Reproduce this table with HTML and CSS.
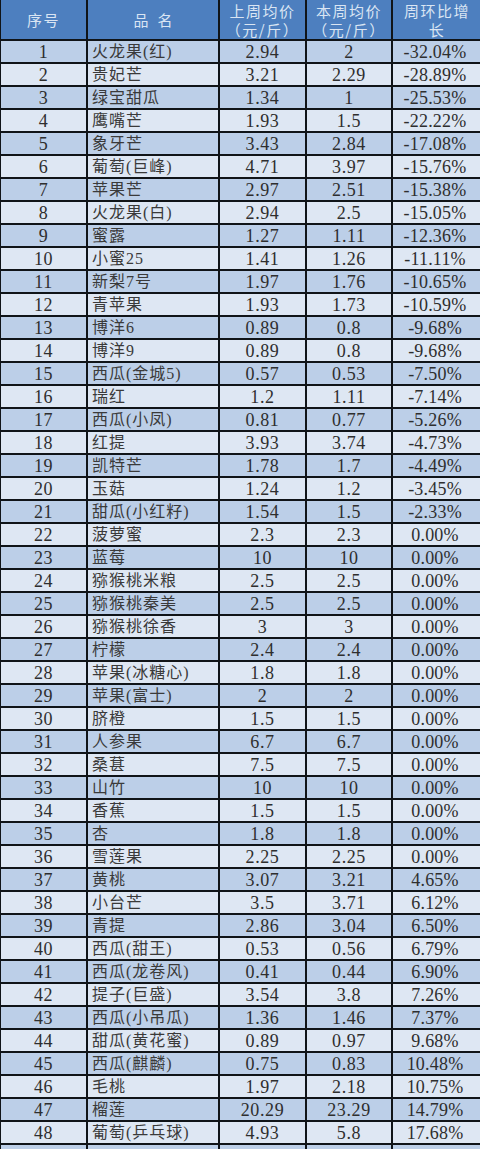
FILE: index.html
```html
<!DOCTYPE html>
<html lang="zh">
<head>
<meta charset="utf-8">
<title>水果价格周环比</title>
<link rel="stylesheet" href="styles.css">
</head>
<body>
<table class="price-table">
<colgroup>
<col class="c-no"><col class="c-name"><col class="c-last"><col class="c-this"><col class="c-rate">
</colgroup>
<thead>
<tr>
<th>序号</th>
<th class="wide">品名</th>
<th><span class="hline">上周均价</span><span class="hline">（元/斤）</span></th>
<th><span class="hline">本周均价</span><span class="hline">（元/斤）</span></th>
<th><span class="hline">周环比增</span><span class="hline">长</span></th>
</tr>
</thead>
<tbody>
<tr><td>1</td><td class="name">火龙果(红)</td><td>2.94</td><td>2</td><td>-32.04%</td></tr>
<tr><td>2</td><td class="name">贵妃芒</td><td>3.21</td><td>2.29</td><td>-28.89%</td></tr>
<tr><td>3</td><td class="name">绿宝甜瓜</td><td>1.34</td><td>1</td><td>-25.53%</td></tr>
<tr><td>4</td><td class="name">鹰嘴芒</td><td>1.93</td><td>1.5</td><td>-22.22%</td></tr>
<tr><td>5</td><td class="name">象牙芒</td><td>3.43</td><td>2.84</td><td>-17.08%</td></tr>
<tr><td>6</td><td class="name">葡萄(巨峰)</td><td>4.71</td><td>3.97</td><td>-15.76%</td></tr>
<tr><td>7</td><td class="name">苹果芒</td><td>2.97</td><td>2.51</td><td>-15.38%</td></tr>
<tr><td>8</td><td class="name">火龙果(白)</td><td>2.94</td><td>2.5</td><td>-15.05%</td></tr>
<tr><td>9</td><td class="name">蜜露</td><td>1.27</td><td>1.11</td><td>-12.36%</td></tr>
<tr><td>10</td><td class="name">小蜜25</td><td>1.41</td><td>1.26</td><td>-11.11%</td></tr>
<tr><td>11</td><td class="name">新梨7号</td><td>1.97</td><td>1.76</td><td>-10.65%</td></tr>
<tr><td>12</td><td class="name">青苹果</td><td>1.93</td><td>1.73</td><td>-10.59%</td></tr>
<tr><td>13</td><td class="name">博洋6</td><td>0.89</td><td>0.8</td><td>-9.68%</td></tr>
<tr><td>14</td><td class="name">博洋9</td><td>0.89</td><td>0.8</td><td>-9.68%</td></tr>
<tr><td>15</td><td class="name">西瓜(金城5)</td><td>0.57</td><td>0.53</td><td>-7.50%</td></tr>
<tr><td>16</td><td class="name">瑞红</td><td>1.2</td><td>1.11</td><td>-7.14%</td></tr>
<tr><td>17</td><td class="name">西瓜(小凤)</td><td>0.81</td><td>0.77</td><td>-5.26%</td></tr>
<tr><td>18</td><td class="name">红提</td><td>3.93</td><td>3.74</td><td>-4.73%</td></tr>
<tr><td>19</td><td class="name">凯特芒</td><td>1.78</td><td>1.7</td><td>-4.49%</td></tr>
<tr><td>20</td><td class="name">玉菇</td><td>1.24</td><td>1.2</td><td>-3.45%</td></tr>
<tr><td>21</td><td class="name">甜瓜(小红籽)</td><td>1.54</td><td>1.5</td><td>-2.33%</td></tr>
<tr><td>22</td><td class="name">菠萝蜜</td><td>2.3</td><td>2.3</td><td>0.00%</td></tr>
<tr><td>23</td><td class="name">蓝莓</td><td>10</td><td>10</td><td>0.00%</td></tr>
<tr><td>24</td><td class="name">猕猴桃米粮</td><td>2.5</td><td>2.5</td><td>0.00%</td></tr>
<tr><td>25</td><td class="name">猕猴桃秦美</td><td>2.5</td><td>2.5</td><td>0.00%</td></tr>
<tr><td>26</td><td class="name">猕猴桃徐香</td><td>3</td><td>3</td><td>0.00%</td></tr>
<tr><td>27</td><td class="name">柠檬</td><td>2.4</td><td>2.4</td><td>0.00%</td></tr>
<tr><td>28</td><td class="name">苹果(冰糖心)</td><td>1.8</td><td>1.8</td><td>0.00%</td></tr>
<tr><td>29</td><td class="name">苹果(富士)</td><td>2</td><td>2</td><td>0.00%</td></tr>
<tr><td>30</td><td class="name">脐橙</td><td>1.5</td><td>1.5</td><td>0.00%</td></tr>
<tr><td>31</td><td class="name">人参果</td><td>6.7</td><td>6.7</td><td>0.00%</td></tr>
<tr><td>32</td><td class="name">桑葚</td><td>7.5</td><td>7.5</td><td>0.00%</td></tr>
<tr><td>33</td><td class="name">山竹</td><td>10</td><td>10</td><td>0.00%</td></tr>
<tr><td>34</td><td class="name">香蕉</td><td>1.5</td><td>1.5</td><td>0.00%</td></tr>
<tr><td>35</td><td class="name">杏</td><td>1.8</td><td>1.8</td><td>0.00%</td></tr>
<tr><td>36</td><td class="name">雪莲果</td><td>2.25</td><td>2.25</td><td>0.00%</td></tr>
<tr><td>37</td><td class="name">黄桃</td><td>3.07</td><td>3.21</td><td>4.65%</td></tr>
<tr><td>38</td><td class="name">小台芒</td><td>3.5</td><td>3.71</td><td>6.12%</td></tr>
<tr><td>39</td><td class="name">青提</td><td>2.86</td><td>3.04</td><td>6.50%</td></tr>
<tr><td>40</td><td class="name">西瓜(甜王)</td><td>0.53</td><td>0.56</td><td>6.79%</td></tr>
<tr><td>41</td><td class="name">西瓜(龙卷风)</td><td>0.41</td><td>0.44</td><td>6.90%</td></tr>
<tr><td>42</td><td class="name">提子(巨盛)</td><td>3.54</td><td>3.8</td><td>7.26%</td></tr>
<tr><td>43</td><td class="name">西瓜(小吊瓜)</td><td>1.36</td><td>1.46</td><td>7.37%</td></tr>
<tr><td>44</td><td class="name">甜瓜(黄花蜜)</td><td>0.89</td><td>0.97</td><td>9.68%</td></tr>
<tr><td>45</td><td class="name">西瓜(麒麟)</td><td>0.75</td><td>0.83</td><td>10.48%</td></tr>
<tr><td>46</td><td class="name">毛桃</td><td>1.97</td><td>2.18</td><td>10.75%</td></tr>
<tr><td>47</td><td class="name">榴莲</td><td>20.29</td><td>23.29</td><td>14.79%</td></tr>
<tr><td>48</td><td class="name">葡萄(乒乓球)</td><td>4.93</td><td>5.8</td><td>17.68%</td></tr>
<tr class="partial"><td></td><td class="name"></td><td></td><td></td><td></td></tr>
</tbody>
</table>
</body>
</html>
```
FILE: styles.css
```css
html, body {
  margin: 0;
  padding: 0;
  overflow: hidden;
  background: #ffffff;
}

.price-table {
  border-collapse: collapse;
  table-layout: fixed;
  width: 482px;
  margin-left: -1px;
  font-family: "Liberation Serif", "Noto Sans CJK SC", serif;
  color: #2e2e2e;
}

.c-no { width: 87px; }
.c-name { width: 132px; }
.c-last { width: 87px; }
.c-this { width: 86px; }
.c-rate { width: 90px; }

.price-table th,
.price-table td {
  border: 2px solid #101418;
  padding: 0;
  text-align: center;
  vertical-align: middle;
  white-space: nowrap;
}

.price-table td {
  overflow: hidden;
}

.price-table th {
  height: 39px;
  background: #4d7fbf;
  color: #dae5f3;
  font-family: "Noto Sans CJK SC", sans-serif;
  font-weight: 400;
  font-size: 15px;
  line-height: 19px;
  letter-spacing: 1.5px;
  border-top: 0;
}

.hline {
  display: block;
  height: 19px;
  line-height: 19px;
}

.price-table th.wide {
  letter-spacing: 9px;
  text-indent: 9px;
}

.price-table td {
  height: 21px;
  font-size: 18px;
  line-height: 20px;
  letter-spacing: 0.6px;
}

.price-table td:last-child {
  letter-spacing: 0.2px;
  padding-right: 4px;
}

.price-table td.name {
  text-align: left;
  padding-left: 4px;
  font-family: "Liberation Serif", "Noto Sans CJK SC", serif;
  font-size: 16px;
  letter-spacing: 1px;
  color: #3a3a3a;
}

.price-table tbody tr:nth-child(odd) td {
  background: #bccfe8;
}

.price-table tbody tr:nth-child(even) td {
  background: #dee7f3;
}
```
